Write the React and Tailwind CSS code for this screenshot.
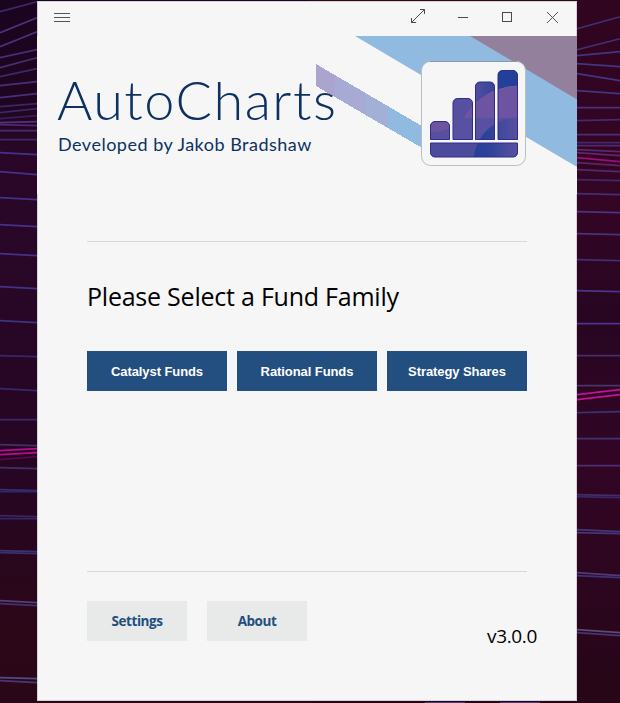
import React from "react";

// Wallpaper strands: [y at outer edge, y at window edge, colour]
const leftLines = [
  [11, 1, "#3d2a6b"], [32, 17, "#4a347c"], [46, 31, "#49337a"], [57, 49, "#453072"],
  [67, 57, "#453072"], [76, 68, "#3d2a68"], [85, 81, "#453279"], [97, 93, "#453279"],
  [106, 103, "#3b2765"], [112, 108, "#3b2765"], [118, 115, "#33205a"], [122, 121, "#583080"],
  [124, 125, "#4d2a74"], [130, 130, "#4a2b72"], [139, 139, "#3c2965"], [152, 154, "#44318a"],
  [171, 174, "#44318a"], [197, 199, "#44318a"], [224, 226, "#44318a"], [253, 255, "#44318a"],
  [286, 288, "#44318a"], [320, 322, "#3b3480"], [355, 356, "#38276a"], [388, 390, "#38276a"],
  [419, 419, "#38276a"], [444, 445, "#453064"], [450, 448, "#b50e91"], [454, 452, "#b50e91"],
  [459, 456, "#540b45"], [467, 468, "#423064"], [489, 490, "#3a2c70"], [491, 491, "#302668"],
  [515, 516, "#392462"], [518, 518, "#392462"], [550, 551, "#323779"], [552, 553, "#432a70"],
  [600, 602, "#51407a"], [603, 605, "#45306e"], [677, 678, "#4f4c85"], [680, 682, "#4b376f"],
];
const rightLines = [
  [16, 28, "#423075"], [38, 49, "#423075"], [51, 55, "#433582"], [66, 63, "#433582"],
  [80, 73, "#433582"], [93, 90, "#433582"], [107, 107, "#4d327b"], [119, 120, "#402a70"],
  [134, 134, "#4d2e78"], [142, 142, "#442967"], [145, 145, "#4b2b72"], [151, 149, "#582a6d"],
  [155, 152, "#65256e"], [161, 157, "#9c0d79"], [165, 162, "#5e2468"], [171, 169, "#502b68"],
  [180, 179, "#402966"], [194, 193, "#472e70"], [212, 211, "#493582"], [234, 233, "#49347b"],
  [260, 259, "#442d70"], [291, 290, "#4c3588"], [323, 323, "#4c3588"], [355, 355, "#403168"],
  [385, 385, "#49376a"], [389, 394, "#c5109a"], [394, 399, "#c5109a"], [411, 412, "#3b336b"],
  [438, 438, "#43346d"], [465, 465, "#48316e"], [495, 494, "#442e69"], [497, 496, "#392568"],
  [531, 529, "#443678"], [533, 532, "#443678"], [575, 572, "#503a7a"], [577, 575, "#413078"],
  [632, 629, "#5b4a7c"], [635, 632, "#4a346e"],
];

function Wallpaper() {
  return (
    <svg className="absolute inset-0" width="620" height="703" aria-hidden="true">
      <defs>
        <linearGradient id="nightL" x1="0" x2="0" y1="0" y2="1">
          <stop offset="0" stopColor="#1a041f" />
          <stop offset="0.15" stopColor="#200520" />
          <stop offset="0.23" stopColor="#2a0729" />
          <stop offset="0.68" stopColor="#260623" />
          <stop offset="0.9" stopColor="#2b0717" />
          <stop offset="1" stopColor="#2a0718" />
        </linearGradient>
        <linearGradient id="nightR" x1="0" x2="0" y1="0" y2="1">
          <stop offset="0" stopColor="#30051f" />
          <stop offset="0.3" stopColor="#340525" />
          <stop offset="0.45" stopColor="#270622" />
          <stop offset="0.65" stopColor="#320525" />
          <stop offset="0.85" stopColor="#2b061e" />
          <stop offset="1" stopColor="#260617" />
        </linearGradient>
      </defs>
      <rect width="310" height="703" fill="url(#nightL)" />
      <rect x="310" width="310" height="703" fill="url(#nightR)" />
      {leftLines.map(([a, b, c], i) => (
        <line key={i} x1="0" y1={a + 0.7} x2="37" y2={b + 0.7} stroke={c} strokeWidth="1.7" />
      ))}
      {rightLines.map(([a, b, c], i) => (
        <line key={i} x1="577" y1={b + 0.7} x2="620" y2={a + 0.7} stroke={c} strokeWidth="1.7" />
      ))}
      <path d="M425 702.5H465M500 702.5H540" stroke="#4b3a70" />
    </svg>
  );
}

function Ribbons() {
  return (
    <svg className="absolute right-0 top-0" width="261" height="158" viewBox="316 36 261 158" aria-hidden="true">
      <path d="M355 36H471L577 99V167Z" fill="#90badf" />
      <path d="M470 36H577V99.5Z" fill="#92809d" />
      <g shapeRendering="crispEdges">
        <path d="M316 64L335 75.2V97.1L316 86Z" fill="#aaa4cf" />
        <path d="M335 75.2L365 92.7V114.7L335 97.1Z" fill="#a7aad4" />
        <path d="M365 92.7L388 106.2V128.1L365 114.7Z" fill="#a2b0d8" />
        <path d="M388 106.2L430 130.8V152.6L388 128.1Z" fill="#90badf" />
      </g>
    </svg>
  );
}

function Logo() {
  const shapes = (
    <>
      <path d="M430.5 139.5V126a4.5 4.5 0 0 1 4.5-4.5h10a4.5 4.5 0 0 1 4.5 4.5v13.5z" />
      <path d="M453 139.5V103a4.5 4.5 0 0 1 4.5-4.5h10.5a4.5 4.5 0 0 1 4.5 4.5v36.5z" />
      <path d="M475.5 139.5V86.5a4.5 4.5 0 0 1 4.5-4.5h10a4.5 4.5 0 0 1 4.5 4.5v53z" />
      <path d="M498 139.5V75a4.5 4.5 0 0 1 4.5-4.5h10.5a4.5 4.5 0 0 1 4.5 4.5v64.5z" />
      <path d="M430.5 143h87v9.5a4.5 4.5 0 0 1-4.5 4.5h-78a4.5 4.5 0 0 1-4.5-4.5z" />
    </>
  );
  return (
    <svg className="absolute right-[50px] top-[25px]" width="107" height="107" viewBox="420 61 107 107" role="img" aria-label="AutoCharts logo">
      <defs>
        <clipPath id="bars">{shapes}</clipPath>
        <linearGradient id="lower" x1="473" x2="518" y1="0" y2="0" gradientUnits="userSpaceOnUse">
          <stop offset="0" stopColor="#234099" />
          <stop offset="0.4" stopColor="#2f439a" />
          <stop offset="0.65" stopColor="#434a9c" />
          <stop offset="1" stopColor="#5850a1" />
        </linearGradient>
        <linearGradient id="third" x1="0" x2="1">
          <stop offset="0" stopColor="#504ea0" />
          <stop offset="1" stopColor="#36449b" />
        </linearGradient>
      </defs>
      <rect x="421.5" y="61.5" width="104" height="104" rx="9" fill="#f6f6f6" stroke="#b9bec2" />
      <path d="M430 61.5H517" stroke="#8a98a8" />
      <g clipPath="url(#bars)">
        <rect x="430" y="70" width="88" height="88" fill="#5750a0" />
        <rect x="475" y="80" width="20" height="60" fill="url(#third)" />
        <rect x="498" y="70" width="20" height="70" fill="#234099" />
        <path d="M430 120h20v8q-8 4-20 4z" fill="#6d54a1" />
        <circle cx="519" cy="148" r="62" fill="#6d54a1" stroke="#8057a5" />
        <path d="M452 118h66v22h-66z" fill="#5850a0" />
        <path d="M430 142h88v16h-88z" fill="#4d4c9c" />
        <circle cx="518" cy="162" r="44.5" fill="url(#lower)" />
      </g>
      <g fill="none" stroke="#302b8c">{shapes}</g>
    </svg>
  );
}

function TitleBar() {
  return (
    <div className="flex h-[35px] items-start justify-between border border-b-0 border-[#d4d4d4] pl-4 pr-[12px]">
      <button aria-label="Menu" className="mt-[11px] flex w-4 flex-col gap-[3px]">
        <span className="h-px w-full bg-[#555]" />
        <span className="h-px w-full bg-[#555]" />
        <span className="h-px w-full bg-[#555]" />
      </button>
      <svg width="154" height="34" viewBox="410 2 154 34" fill="none" stroke="#4a4a4a" aria-hidden="true">
        <path d="M411.5 22.5L424.5 9.5M420 9.500H424.500V14M411.500 18V22.500H416" />
        <path d="M458 17.500H468" />
        <rect x="502.500" y="12.500" width="9" height="9" />
        <path d="M547 12L558 23M558 12L547 23" stroke="#555" />
      </svg>
    </div>
  );
}

const fundFamilies = ["Catalyst Funds", "Rational Funds", "Strategy Shares"];

export default function App() {
  return (
    <div className="relative h-[703px] w-[620px] overflow-hidden bg-[#2a0722] pl-[37px] pt-px">
      <Wallpaper />
      <main className="relative flex h-[700px] w-[540px] flex-col bg-[#f6f6f6] font-['Open_Sans',sans-serif] text-black">
        <TitleBar />
        <header className="relative h-[158px] shrink-0 pl-[20px] pt-[32px] font-['Lato',sans-serif] text-[#0d3261]">
          <Ribbons />
          <Logo />
          <h1 className="relative w-max whitespace-nowrap text-[54px] font-light leading-[64px] tracking-[1.5px]">AutoCharts</h1>
          <p className="relative ml-px w-max whitespace-nowrap text-[18px] leading-6 tracking-[0.5px]">Developed by Jakob Bradshaw</p>
        </header>
        <div className="flex flex-1 flex-col border border-t-0 border-[#d4d4d4] px-[49px]">
          <section className="mt-[47px] h-[330px] border-t border-[#d4d8d8]">
            <h2 className="mt-[36px] w-max whitespace-nowrap text-[25px] leading-9 tracking-[-0.23px]">Please Select a Fund Family</h2>
            <div className="mt-[37px] grid grid-cols-3 gap-2.5">
              {fundFamilies.map((name) => (
                <button key={name} className="h-10 whitespace-nowrap bg-[#234e80] pt-0.5 font-['Liberation_Sans',sans-serif] text-[13px] font-bold tracking-[-0.08px] text-white">
                  {name}
                </button>
              ))}
            </div>
          </section>
          <footer className="flex border-t border-[#d4d8d8] pt-[29px]">
            <button className="h-10 w-[100px] bg-[#e7eae9] text-[13.5px] font-bold tracking-[-0.45px] text-[#234e80]">Settings</button>
            <button className="ml-5 h-10 w-[100px] bg-[#e7eae9] text-[13.5px] font-bold tracking-[-0.45px] text-[#234e80]">About</button>
            <span className="-mr-[10px] ml-auto mt-[21px] text-[19px] leading-7 tracking-[-0.35px]">v3.0.0</span>
          </footer>
        </div>
      </main>
    </div>
  );
}
